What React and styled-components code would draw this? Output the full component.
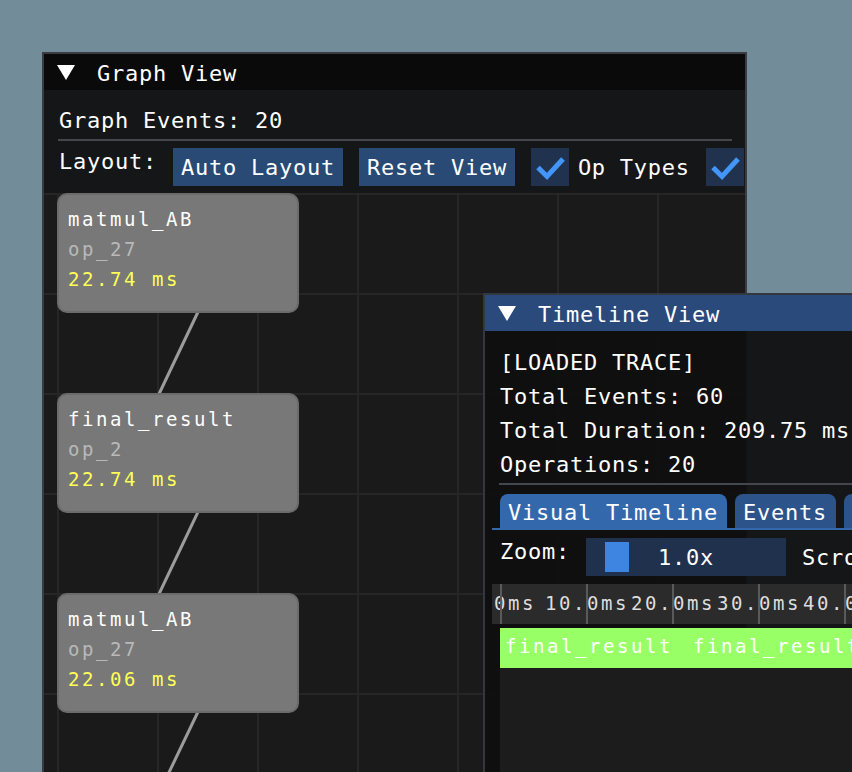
import React from "react";
import styled, { createGlobalStyle } from "styled-components";

const GlobalStyle = createGlobalStyle`
  html, body {
    margin: 0;
    padding: 0;
    background: #738c99;
    overflow: hidden;
  }
  body {
    font-family: "DejaVu Sans Mono", "Liberation Mono", monospace;
    font-size: 22px;
    letter-spacing: 0.75px;
    line-height: 26px;
    color: #ffffff;
  }
`;

const Desktop = styled.div`
  position: relative;
  width: 852px;
  height: 772px;
  overflow: hidden;
`;

// ImGui-like window floating on the desktop
const Window = styled.div`
  position: absolute;
  left: ${(p) => p.$x}px;
  top: ${(p) => p.$y}px;
  width: ${(p) => p.$w}px;
  height: ${(p) => p.$h}px;
  box-sizing: border-box;
  border: 2px solid ${(p) => p.$border};
  background: rgba(15, 15, 15, 0.94);
  overflow: hidden;
  white-space: nowrap;
`;

const TitleBar = styled.div`
  height: 36px;
  box-sizing: border-box;
  display: flex;
  align-items: center;
  padding: 0 0 0 13px;
  gap: 22px;
  background: ${(p) => (p.$active ? "#294a7a" : "#0a0a0a")};
`;

const TitleText = styled.span`
  position: relative;
  top: 1.5px;
`;

const Body = styled.div`
  padding: ${(p) => p.$pt}px 13px 0 15px;
`;

const Line = styled.div`
  height: 26px;
`;

const Lines = styled.div`
  display: flex;
  flex-direction: column;
  gap: 8px;
`;

const Separator = styled.div`
  height: 2px;
  margin: ${(p) => p.$mt}px 0 0 -1px;
  background: #45474e;
`;

const Toolbar = styled.div`
  display: flex;
  align-items: flex-start;
  gap: 16px;
  height: 38px;
  margin-top: 7px;
`;

const Label = styled.span`
  padding-top: ${(p) => (p.$framed ? 7 : 1)}px;
`;

const Button = styled.div`
  box-sizing: border-box;
  height: 38px;
  padding: 7px 8px 5px;
  background: #284a75;
`;

const CheckItem = styled.div`
  display: flex;
  align-items: flex-start;
  gap: 9px;
`;

const CheckBox = styled.div`
  width: 38px;
  height: 38px;
  flex: none;
  background: #21324e;
  display: flex;
  align-items: center;
  justify-content: center;
`;

const Canvas = styled.div`
  position: relative;
  height: 600px;
  margin: 7px -13px 0 -15px;
  background-color: #1a1a1a;
  background-image: linear-gradient(to right, #262626 2px, transparent 2px),
    linear-gradient(to bottom, #262626 2px, transparent 2px);
  background-size: 100px 100px;
  background-position: 13px 0, 0 0;
`;

const Edges = styled.svg`
  position: absolute;
  left: 0;
  top: 0;
`;

const Node = styled.div`
  position: absolute;
  left: 13px;
  top: ${(p) => p.$y}px;
  width: 242px;
  height: 120px;
  box-sizing: border-box;
  border: 2px solid #6b6b6b;
  border-radius: 10px;
  background: #787878;
  padding: 9px 0 0 9px;
  font-size: 19px;
  letter-spacing: 2.56px;
  line-height: 30px;
`;

const NodeText = styled.div`
  color: ${(p) => p.$color || "#ffffff"};
`;

const TabBar = styled.div`
  display: flex;
  gap: 8px;
  margin: 9px 0 0 -8px;
  padding-left: 8px;
  border-bottom: 2px solid #3468ad;
`;

const Tab = styled.div`
  box-sizing: border-box;
  height: 34px;
  padding: 6px 9px 0 8px;
  border-radius: 8px 8px 0 0;
  background: ${(p) => (p.$active ? "#3468ad" : "#2c548a")};
`;

const ZoomRow = styled.div`
  display: flex;
  align-items: flex-start;
  gap: 16px;
  height: 38px;
  margin-top: 8px;
`;

const Slider = styled.div`
  position: relative;
  width: 200px;
  height: 38px;
  flex: none;
  box-sizing: border-box;
  padding-top: 7px;
  text-align: center;
  background: #20314e;
`;

const SliderGrab = styled.div`
  position: absolute;
  top: 4px;
  width: 24px;
  height: 30px;
  background: #3d85e0;
`;

const SliderValue = styled.span`
  position: relative;
`;

const Ruler = styled.div`
  position: relative;
  height: 40px;
  margin: 8px 0 0 -8px;
  background: #2b2b2b;
  overflow: hidden;
  font-size: 19px;
  letter-spacing: 2.56px;
  line-height: 20px;
  color: #dddddd;
`;

const Tick = styled.div`
  position: absolute;
  top: 0;
  width: 2px;
  height: 40px;
  background: #5a5a5a;
`;

const TickLabel = styled.div`
  position: absolute;
  top: 9px;
  transform: translateX(-50%);
`;

const Track = styled.div`
  margin-top: 4px;
  height: 200px;
  background: #1c1c1c;
`;

const EventBar = styled.div`
  display: flex;
  height: 40px;
  background: #99ff66;
  font-size: 19px;
  letter-spacing: 2.56px;
  line-height: 36px;
`;

const EventSeg = styled.div`
  flex: none;
  padding-left: 5px;
  box-sizing: border-box;
  overflow: hidden;
`;

function Arrow() {
  return (
    <svg width="18" height="15" viewBox="0 0 18 15">
      <polygon points="0,0 18,0 9,15" fill="#ffffff" />
    </svg>
  );
}

function Check() {
  return (
    <svg width="38" height="38" viewBox="0 0 38 38">
      <polyline
        points="7,19.5 16,28.5 32,11"
        fill="none"
        stroke="#4296fa"
        strokeWidth="5"
      />
    </svg>
  );
}

const nodes = [
  { y: 0, name: "matmul_AB", id: "op_27", ms: "22.74" },
  { y: 200, name: "final_result", id: "op_2", ms: "22.74" },
  { y: 400, name: "matmul_AB", id: "op_27", ms: "22.06" },
];

const edges = [
  [163, 100, 105, 222],
  [163, 300, 105, 422],
  [163, 500, 96, 640],
];

const PX_PER_MS = 8.6;
const ticks = [0, 10, 20, 30, 40];
const events = [
  { name: "final_result", ms: 21.86 },
  { name: "final_result", ms: 22.74 },
];

export default function App() {
  const zoom = 1.0;
  const grabLeft = 19 + (zoom - 1) * 17;

  return (
    <Desktop>
      <GlobalStyle />

      <Window $x={42} $y={52} $w={705} $h={740} $border="#3a3c41">
        <TitleBar>
          <Arrow />
          <TitleText>Graph View</TitleText>
        </TitleBar>
        <Body $pt={18}>
          <Line>Graph Events: 20</Line>
          <Separator $mt={5} />
          <Toolbar>
            <Label>Layout:</Label>
            <Button>Auto Layout</Button>
            <Button>Reset View</Button>
            <CheckItem>
              <CheckBox>
                <Check />
              </CheckBox>
              <Label $framed>Op Types</Label>
            </CheckItem>
            <CheckBox>
              <Check />
            </CheckBox>
          </Toolbar>
          <Canvas>
            <Edges width="701" height="600">
              {edges.map(([x1, y1, x2, y2], i) => (
                <line
                  key={i}
                  x1={x1}
                  y1={y1}
                  x2={x2}
                  y2={y2}
                  stroke="#9c9c9c"
                  strokeWidth="3"
                />
              ))}
            </Edges>
            {nodes.map((n, i) => (
              <Node key={i} $y={n.y}>
                <NodeText>{n.name}</NodeText>
                <NodeText $color="#b9b9b9">{n.id}</NodeText>
                <NodeText $color="#ffff55">{n.ms} ms</NodeText>
              </Node>
            ))}
          </Canvas>
        </Body>
      </Window>

      <Window $x={483} $y={293} $w={420} $h={520} $border="#33373f">
        <TitleBar $active>
          <Arrow />
          <TitleText>Timeline View</TitleText>
        </TitleBar>
        <Body $pt={19}>
          <Lines>
            <Line>[LOADED TRACE]</Line>
            <Line>Total Events: 60</Line>
            <Line>Total Duration: 209.75 ms</Line>
            <Line>Operations: 20</Line>
          </Lines>
          <Separator $mt={5} />
          <TabBar>
            <Tab $active>Visual Timeline</Tab>
            <Tab>Events</Tab>
            <Tab>Stats</Tab>
          </TabBar>
          <ZoomRow>
            <Label>Zoom:</Label>
            <Slider>
              <SliderGrab style={{ left: grabLeft }} />
              <SliderValue>{zoom.toFixed(1)}x</SliderValue>
            </Slider>
            <Label $framed>Scroll:</Label>
          </ZoomRow>
          <Ruler>
            {ticks.map((t) => (
              <React.Fragment key={t}>
                <TickLabel style={{ left: 9 + t * PX_PER_MS }}>
                  {t.toFixed(1)}ms
                </TickLabel>
                <Tick style={{ left: 8 + t * PX_PER_MS }} />
              </React.Fragment>
            ))}
          </Ruler>
          <Track>
            <EventBar>
              {events.map((e, i) => (
                <EventSeg key={i} style={{ width: e.ms * PX_PER_MS }}>
                  {e.name}
                </EventSeg>
              ))}
            </EventBar>
          </Track>
        </Body>
      </Window>
    </Desktop>
  );
}
